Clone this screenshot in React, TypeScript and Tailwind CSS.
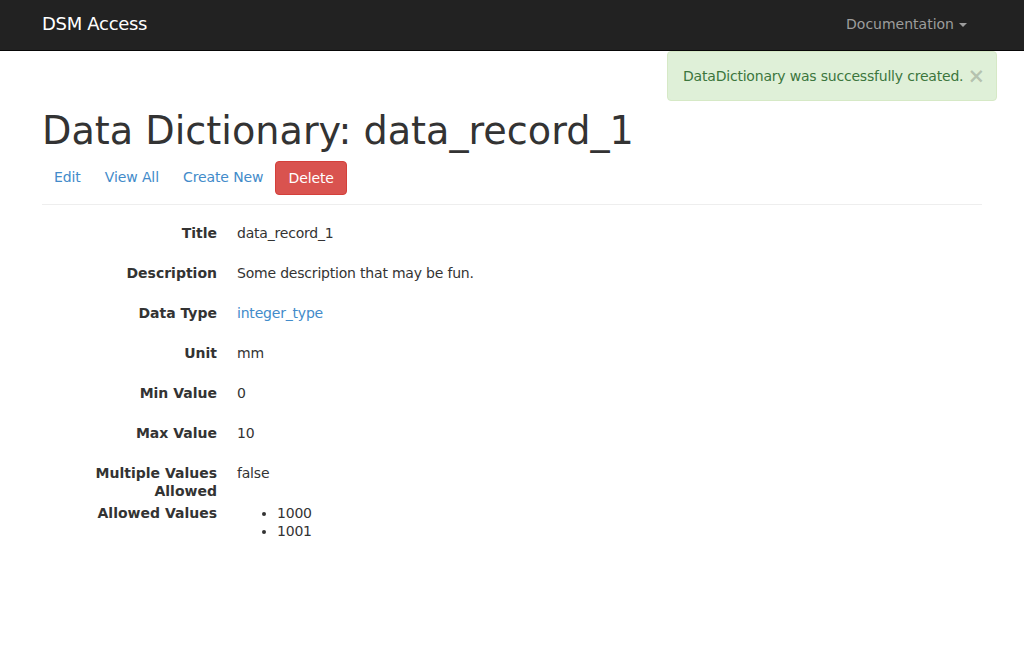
const fields: { label: string; value?: string; link?: boolean; list?: string[] }[] = [
  { label: 'Title', value: 'data_record_1' },
  { label: 'Description', value: 'Some description that may be fun.' },
  { label: 'Data Type', value: 'integer_type', link: true },
  { label: 'Unit', value: 'mm' },
  { label: 'Min Value', value: '0' },
  { label: 'Max Value', value: '10' },
  { label: 'Multiple Values Allowed', value: 'false' },
  { label: 'Allowed Values', list: ['1000', '1001'] },
]

export default function App() {
  return (
    <div className="min-h-[661px] bg-white text-[14px] leading-[20px] text-[#333] font-['DejaVu_Sans',sans-serif]">
      <nav className="h-[51px] bg-[#222] border-b border-[#080808]">
        <div className="w-[970px] mx-auto px-[15px] h-[50px] pb-[2px] flex items-center justify-between">
          <a className="text-[18px] text-white leading-[20px] tracking-[-0.3px]">DSM Access</a>
          <a className="flex items-center text-[#9d9d9d] mr-[15px]">
            Documentation
            <span className="ml-[5px] mt-[2px] w-0 h-0 border-x-[4px] border-x-transparent border-t-[4px] border-t-[#9d9d9d]" />
          </a>
        </div>
      </nav>

      <div className="relative w-[970px] mx-auto px-[15px] tracking-[-0.2px]">
        <div className="absolute right-0 top-0 w-[330px] h-[50px] flex items-center justify-between px-[15px] bg-[#dff0d8] border border-[#d6e9c6] rounded-[4px] text-[#3c763d] whitespace-nowrap">
          <span>DataDictionary was successfully created.</span>
          <span className="text-[21px] font-bold leading-none text-black/20 mr-[-4px]">×</span>
        </div>

        <h1 className="pt-[59px] mb-[9px] text-[38.2px] leading-[42px] font-medium tracking-normal">Data Dictionary: data_record_1</h1>

        <div className="flex h-[34px] tracking-[-0.1px]">
          {['Edit', 'View All', 'Create New'].map((l) => (
            <a key={l} className="px-[12px] py-[6px] text-[#428bca]">{l}</a>
          ))}
          <a className="px-[12px] py-[6px] bg-[#d9534f] border border-[#d43f3a] rounded-[4px] text-white">Delete</a>
        </div>

        <hr className="mt-[9px] border-0 border-t border-[#eee]" />

        <dl className="mt-[19px] pl-[15px] leading-[18px]">
          {fields.map((f) => (
            <div key={f.label} className="flex min-h-[40px] items-start">
              <dt className="w-[160px] shrink-0 text-right font-bold tracking-normal">{f.label}</dt>
              <dd className="ml-[20px]">
                {f.list ? (
                  <ul className="list-disc pl-[40px]">
                    {f.list.map((v) => (
                      <li key={v}>{v}</li>
                    ))}
                  </ul>
                ) : f.link ? (
                  <a className="text-[#428bca]">{f.value}</a>
                ) : (
                  f.value
                )}
              </dd>
            </div>
          ))}
        </dl>
      </div>
    </div>
  )
}
